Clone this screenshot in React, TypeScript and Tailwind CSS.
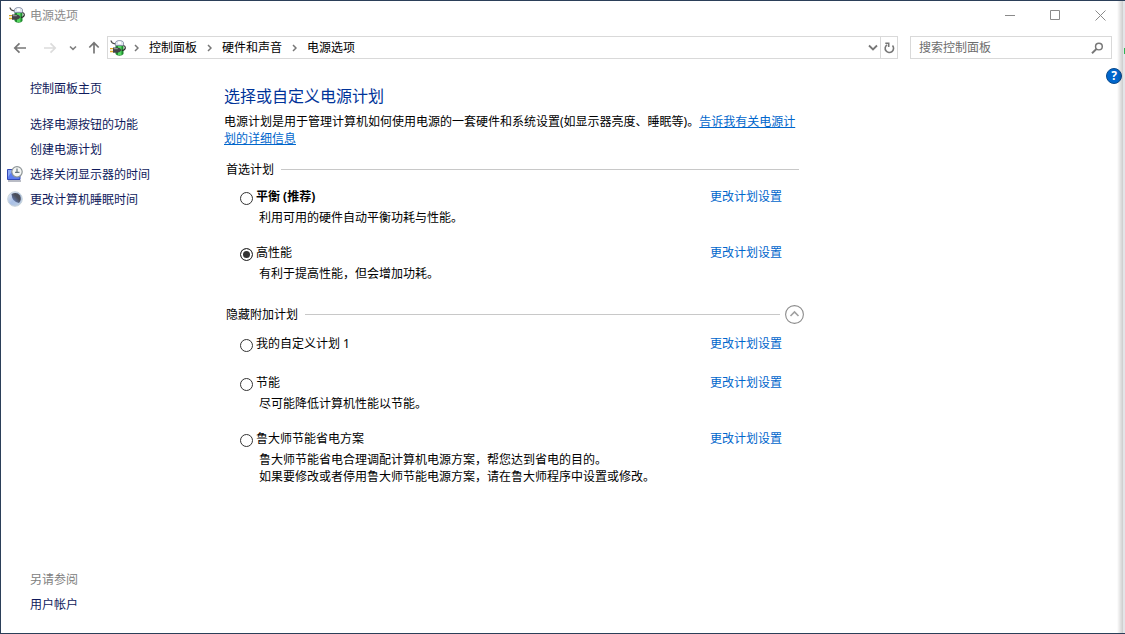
import { useState } from 'react';

type Plan = {
  id: string;
  name: string;
  description?: string[];
  recommended?: boolean;
};

const preferredPlans: Plan[] = [
  {
    id: 'balanced',
    name: '平衡 (推荐)',
    description: ['利用可用的硬件自动平衡功耗与性能。'],
    recommended: true,
  },
  {
    id: 'performance',
    name: '高性能',
    description: ['有利于提高性能，但会增加功耗。'],
  },
];

const extraPlans: Plan[] = [
  { id: 'custom', name: '我的自定义计划 1' },
  {
    id: 'saver',
    name: '节能',
    description: ['尽可能降低计算机性能以节能。'],
  },
  {
    id: 'ludashi',
    name: '鲁大师节能省电方案',
    description: [
      '鲁大师节能省电合理调配计算机电源方案，帮您达到省电的目的。',
      '如果要修改或者停用鲁大师节能电源方案，请在鲁大师程序中设置或修改。',
    ],
  },
];

function PowerIcon() {
  return (
    <svg width="16" height="16" viewBox="0 0 16 16" className="shrink-0">
      <path d="M5.500 5.500h8v8.500q-1 1.700-4 1.700t-4-1.700z" fill="#1f8a2e" />
      <path d="M8 5.500h3.500v9.500H8z" fill="#55d660" />
      <path d="M5.500 5.500V2.500Q6 .5 9.500 .5t4 2v3z" fill="#dfe5ee" stroke="#6b7690" strokeWidth=".7" />
      <path d="M8 1.500h3V4H8z" fill="#fff" />
      <path d="M1 .5Q1.500 3.500 5 3.800" fill="none" stroke="#4a4a4a" strokeWidth="1.300" />
      <path d="M13.500 5.500q1.800.3 1.800 2.200 0 2.300-3.300 2.800" fill="none" stroke="#2a2a2a" strokeWidth="1.200" />
      <path d="M0 8.700h3.500M0 11.500h3.500" stroke="#e0aa25" strokeWidth="1.300" />
      <path d="M3 7.500h4.500q3 .3 4 2.500-1 2.300-4 2.700H3z" fill="#444447" />
      <path d="M3.800 8.700h4" stroke="#a0a0a4" strokeWidth="1" />
    </svg>
  );
}

function DisplayClockIcon() {
  return (
    <svg width="16" height="16" viewBox="0 0 16 16">
      <path d="M.5 3.500h12.500v10H.5z" fill="#5b7cf0" stroke="#3348b4" />
      <path d="M1 4h5l-5 7z" fill="#8ba8f5" />
      <path d="M1 15h13" stroke="#8b8f9e" strokeWidth="1.200" />
      <circle cx="10" cy="5.800" r="5.200" fill="#f4f6f4" stroke="#8d9496" strokeWidth="1.200" />
      <path d="M10 2.500v4M8 6.300h4.500" fill="none" stroke="#4a5c66" strokeWidth="1" />
    </svg>
  );
}

function MoonIcon() {
  return (
    <svg width="16" height="16" viewBox="0 0 16 16">
      <defs>
        <linearGradient id="moon" x1="0" y1="0" x2="1" y2="1">
          <stop offset="0" stopColor="#eef3f8" />
          <stop offset=".5" stopColor="#a9c0e6" />
          <stop offset="1" stopColor="#c3d2e2" />
        </linearGradient>
        <linearGradient id="night" x1="1" y1="0" x2="0" y2="1">
          <stop offset=".4" stopColor="#4b4f5a" />
          <stop offset="1" stopColor="#6f90d8" />
        </linearGradient>
      </defs>
      <circle cx="8" cy="8" r="7.300" fill="url(#moon)" stroke="#c9d5dc" />
      <path d="M4.500 3Q10 .5 13 4.500q2 4-1 7.500Q5 11 4.500 3z" fill="url(#night)" />
    </svg>
  );
}

function Crumb({ children }: { children: string }) {
  return (
    <>
      <svg width="5" height="8" viewBox="0 0 5 8" className="shrink-0">
        <path d="M1 1l3 3-3 3" fill="none" stroke="#777" strokeWidth="1.500" />
      </svg>
      <a href="#" className="whitespace-nowrap text-black">
        {children}
      </a>
    </>
  );
}

function TitleBar() {
  return (
    <header className="flex h-7 items-center pl-2 text-[#8c8c8c]">
      <PowerIcon />
      <h1 className="ml-[5px] grow">电源选项</h1>
      <div className="flex pr-[2px]">
        <button aria-label="最小化" className="flex h-7 w-[45px] items-center justify-center">
          <svg width="11" height="11" viewBox="0 0 11 11" stroke="#8a8a8a">
            <path d="M0 5.500h10" />
          </svg>
        </button>
        <button aria-label="最大化" className="flex h-7 w-[45px] items-center justify-center">
          <svg width="11" height="11" viewBox="0 0 11 11" stroke="#8a8a8a" fill="none">
            <path d="M.5 .5h9v9h-9z" />
          </svg>
        </button>
        <button aria-label="关闭" className="flex h-7 w-[45px] items-center justify-center">
          <svg width="11" height="11" viewBox="0 0 11 11" stroke="#8a8a8a">
            <path d="M.5 .5l10 10M10.500 .5l-10 10" />
          </svg>
        </button>
      </div>
    </header>
  );
}

function AddressRow() {
  return (
    <div className="mt-[7px] flex h-[23px] items-stretch pl-3 pr-[13px]">
      <nav className="flex w-[94px] items-center">
        <button aria-label="后退">
          <svg width="14" height="12" viewBox="0 0 14 12" fill="none" stroke="#777" strokeWidth="1.700">
            <path d="M13 6H2M6.500 1.300L1.800 6l4.700 4.700" />
          </svg>
        </button>
        <button aria-label="前进" className="ml-4">
          <svg width="14" height="12" viewBox="0 0 14 12" fill="none" stroke="#dcdcdc" strokeWidth="1.700">
            <path d="M1 6h11M7.500 1.300L12.200 6l-4.700 4.700" />
          </svg>
        </button>
        <button aria-label="最近的位置" className="ml-3">
          <svg width="8" height="6" viewBox="0 0 8 6" fill="none" stroke="#808080" strokeWidth="1.600">
            <path d="M1 1.500l3 2.800 3-2.800" />
          </svg>
        </button>
        <button aria-label="上移" className="ml-[11px]">
          <svg width="12" height="13" viewBox="0 0 12 13" fill="none" stroke="#777" strokeWidth="1.700">
            <path d="M6 12.500V2M1.300 6.500L6 1.800l4.700 4.700" />
          </svg>
        </button>
      </nav>
      <div className="flex grow border border-[#d9d9d9]">
        <div className="flex grow items-center pl-0.5">
          <PowerIcon />
          <div className="ml-2 flex items-center gap-2.5">
            <Crumb>控制面板</Crumb>
            <Crumb>硬件和声音</Crumb>
            <Crumb>电源选项</Crumb>
          </div>
        </div>
        <button aria-label="展开地址" className="flex w-[15px] items-center justify-center">
          <svg width="10" height="7" viewBox="0 0 10 7" fill="none" stroke="#777" strokeWidth="1.800">
            <path d="M1 1.500l4 4 4-4" />
          </svg>
        </button>
        <button aria-label="刷新" className="flex w-[17px] items-center justify-center border-l border-[#d9d9d9]">
          <svg width="11" height="12" viewBox="0 0 11 12" fill="none" stroke="#777" strokeWidth="1.600">
            <path d="M3 2.800A4.200 4.200 0 1 0 8.500 3.500" />
            <path d="M1.300 1.200H4.700V5" />
          </svg>
        </button>
      </div>
      <div className="ml-3 flex w-[202px] items-center border border-[#d9d9d9] pl-2 pr-[7px]">
        <input
          type="text"
          aria-label="搜索控制面板"
          placeholder="搜索控制面板"
          className="min-w-0 grow outline-none placeholder:text-[#6d6d6d]"
        />
        <svg width="13" height="12" viewBox="0 0 13 12" fill="none" stroke="#777">
          <circle cx="8" cy="4.500" r="3.400" strokeWidth="1.500" />
          <path d="M5.500 7L1 11.300" strokeWidth="1.900" />
        </svg>
      </div>
    </div>
  );
}

function Sidebar() {
  return (
    <aside className="flex w-[223px] shrink-0 flex-col pl-1.5 pt-[21px] leading-[17px] text-[#0f1a5c]">
      <a href="#" className="ml-[23px]">控制面板主页</a>
      <ul className="mt-[19px] flex flex-col gap-2">
        <li className="ml-[23px]">
          <a href="#">选择电源按钮的功能</a>
        </li>
        <li className="ml-[23px]">
          <a href="#">创建电源计划</a>
        </li>
        <li className="flex items-start gap-[7px]">
          <DisplayClockIcon />
          <a href="#">选择关闭显示器的时间</a>
        </li>
        <li className="flex items-start gap-[7px]">
          <MoonIcon />
          <a href="#">更改计算机睡眠时间</a>
        </li>
      </ul>
      <div className="ml-[23px] mt-auto flex flex-col gap-2 pb-5">
        <h2 className="text-[#808080]">另请参阅</h2>
        <a href="#">用户帐户</a>
      </div>
    </aside>
  );
}

type PlanListProps = {
  plans: Plan[];
  selected: string;
  onSelect: (id: string) => void;
};

function PlanList({ plans, selected, onSelect }: PlanListProps) {
  return (
    <ul className="flex flex-col gap-[18px] pl-4">
      {plans.map((plan) => (
        <li key={plan.id} className="flex min-h-[21px] items-start justify-between pr-[22px]">
          <div>
            <label className={plan.recommended ? 'flex gap-[3px] font-bold' : 'flex gap-[3px]'}>
              <input
                type="radio"
                name="plan"
                checked={selected === plan.id}
                onChange={() => onSelect(plan.id)}
                className="mt-1 size-[13px] shrink-0 appearance-none rounded-full border border-[#333] bg-white checked:bg-[#333] checked:shadow-[inset_0_0_0_2px_white]"
              />
              {plan.name}
            </label>
            {plan.description && (
              <div className="mt-1 pl-[19px]">
                {plan.description.map((line) => (
                  <p key={line}>{line}</p>
                ))}
              </div>
            )}
          </div>
          <a href="#" className="shrink-0 text-[#0066cc]">
            更改计划设置
          </a>
        </li>
      ))}
    </ul>
  );
}

export default function App() {
  const [selected, setSelected] = useState('performance');
  const [expanded, setExpanded] = useState(true);

  return (
    <div className="relative flex min-h-screen flex-col border-y border-l border-[#2b3f59] bg-white font-['Noto_Sans','Noto_Sans_CJK_SC',sans-serif] text-[12px] leading-[17px] text-black">
      <TitleBar />
      <AddressRow />
      <div className="flex grow">
        <Sidebar />
        <main className="w-[580px] leading-[17px]">
          <h2 className="mt-[25px] text-[16px] leading-6 text-[#003399]">选择或自定义电源计划</h2>
          <p className="mt-[5px]">
            电源计划是用于管理计算机如何使用电源的一套硬件和系统设置(如显示器亮度、睡眠等)。
            <a href="#" className="text-[#0066cc] underline">
              告诉我有关电源计划的详细信息
            </a>
          </p>

          <div className="mb-2.5 mt-3.5 flex items-center gap-[7px] pl-0.5 pr-[5px]">
            <h3>首选计划</h3>
            <hr className="grow border-[#c8c8c8]" />
          </div>
          <PlanList plans={preferredPlans} selected={selected} onSelect={setSelected} />

          <div className="mb-[11px] mt-[23px] flex items-center gap-[7px] pl-0.5">
            <h3>隐藏附加计划</h3>
            <hr className="grow border-[#c8c8c8]" />
            <button
              aria-label="隐藏附加计划"
              aria-expanded={expanded}
              onClick={() => setExpanded(!expanded)}
              className="-ml-0.5"
            >
              <svg width="19" height="19" viewBox="0 0 19 19" fill="none" stroke="#8c8c8c">
                <circle cx="9.500" cy="9.500" r="8.900" strokeWidth="1.100" />
                <path d="M5.500 11l4-4 4 4" strokeWidth="1.600" stroke="#a0a0a0" />
              </svg>
            </button>
          </div>
          {expanded && <PlanList plans={extraPlans} selected={selected} onSelect={setSelected} />}
        </main>
        <button
          aria-label="帮助"
          className="ml-auto mr-[3px] mt-[9px] flex size-4 items-center justify-center self-start rounded-full border border-[#0a4a8c] bg-[#0066cc] text-[12px] font-bold leading-none text-white"
        >
          ?
        </button>
      </div>
      {/* window edge shadow and the strip behind it */}
      <div className="pointer-events-none absolute inset-y-0 right-0 flex">
        <div className="w-1.5 bg-linear-to-r from-transparent to-black/20" />
        <div className="w-0.5 bg-[#e3e5e8]" />
      </div>
      <div className="absolute right-0 top-[47px] h-1.5 w-px bg-[#2fb457]" />
    </div>
  );
}
